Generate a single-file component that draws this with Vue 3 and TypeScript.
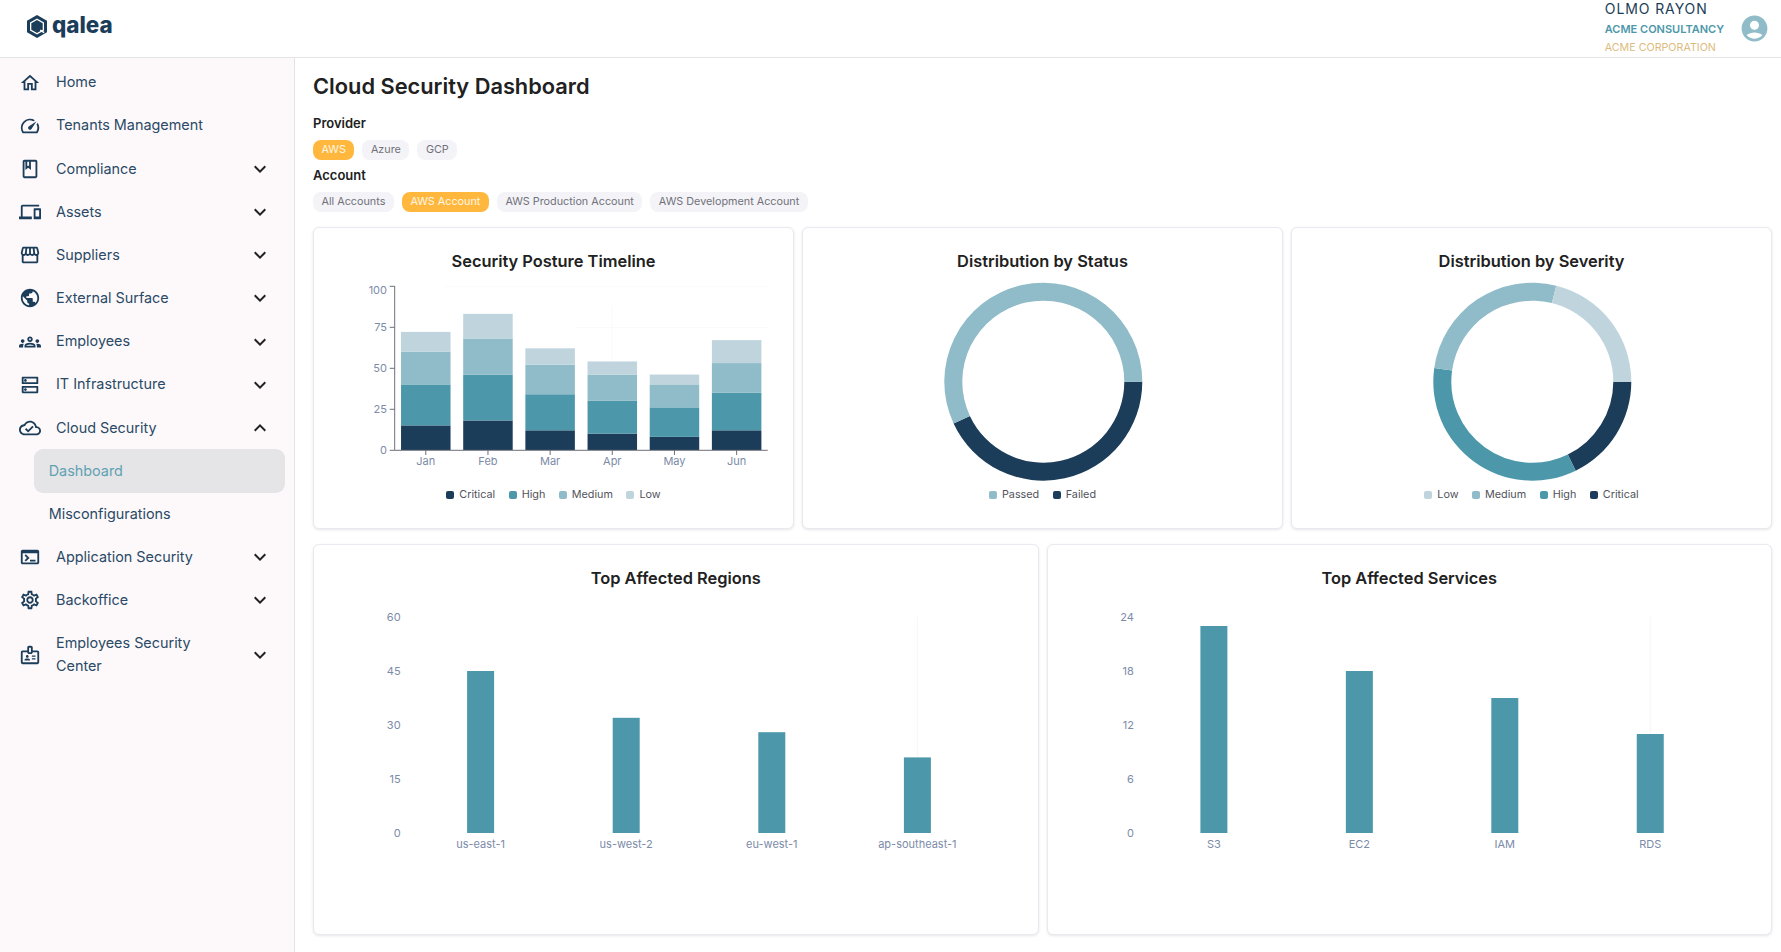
<script setup lang="ts">
interface NavItem { label: string; d: string; chevron?: 'down' | 'up' }

const DOWN = 'M16.59 8.59 12 13.17 7.41 8.59 6 10l6 6 6-6z'
const UP = 'm12 8-6 6 1.41 1.41L12 10.83l4.59 4.58L18 14z'

const topItems: NavItem[] = [
  { label: 'Home', d: 'M12 5.69l5 4.5V18h-2v-6H9v6H7v-7.81l5-4.5M12 3L2 12h3v8h6v-6h2v6h6v-8h3L12 3z' },
  { label: 'Tenants Management', d: 'M20.38 8.57l-1.23 1.85a8 8 0 0 1-.22 7.58H5.07A8 8 0 0 1 15.58 6.85l1.85-1.23A10 10 0 0 0 3.35 19a2 2 0 0 0 1.72 1h13.85a2 2 0 0 0 1.74-1 10 10 0 0 0-.27-10.44zm-9.79 6.84a2 2 0 0 0 2.83 0l5.66-8.49-8.49 5.66a2 2 0 0 0 0 2.83z' },
  { label: 'Compliance', chevron: 'down', d: 'M18 2H6c-1.1 0-2 .9-2 2v16c0 1.1.9 2 2 2h12c1.1 0 2-.9 2-2V4c0-1.1-.9-2-2-2zM9 4h2v5l-1-.75L9 9V4zm9 16H6V4h1v9l3-2.25L13 13V4h5v16z' },
  { label: 'Assets', chevron: 'down', d: 'M4 6h18V4H4c-1.1 0-2 .9-2 2v11H0v3h14v-3H4V6zm19 2h-6c-.55 0-1 .45-1 1v10c0 .55.45 1 1 1h6c.55 0 1-.45 1-1V9c0-.55-.45-1-1-1zm-1 9h-4v-7h4v7z' },
  { label: 'Suppliers', chevron: 'down', d: 'M21.9 8.89l-1.05-4.37c-.22-.9-1-1.52-1.91-1.52H5.05c-.9 0-1.69.63-1.9 1.52L2.1 8.89c-.24 1.02-.02 2.06.62 2.88.08.11.19.19.28.29V19c0 1.1.9 2 2 2h14c1.1 0 2-.9 2-2v-6.94c.09-.09.2-.18.28-.28.64-.82.87-1.87.62-2.89zm-2.99-3.9l1.05 4.37c.1.42.01.84-.25 1.17-.14.18-.44.47-.94.47-.61 0-1.14-.49-1.21-1.14L16.98 5l1.93-.01zM13 5h1.96l.54 4.52c.05.39-.07.78-.33 1.07-.22.26-.54.41-.95.41-.67 0-1.22-.59-1.22-1.31V5zM8.49 9.52L9.04 5H11v4.69c0 .72-.55 1.31-1.29 1.31-.34 0-.65-.15-.89-.41-.25-.29-.37-.68-.33-1.07zm-4.45-.16L5.05 5h1.97l-.58 4.86c-.08.65-.6 1.14-1.21 1.14-.49 0-.8-.29-.93-.47-.27-.32-.36-.75-.26-1.17zM5 19v-6.03c.08.01.15.03.23.03.87 0 1.66-.36 2.24-.95.6.6 1.4.95 2.31.95.87 0 1.65-.36 2.23-.93.59.57 1.39.93 2.29.93.84 0 1.64-.35 2.24-.95.58.59 1.37.95 2.24.95.08 0 .15-.02.23-.03V19H5z' },
  { label: 'External Surface', chevron: 'down', d: 'M12 2C6.48 2 2 6.48 2 12s4.48 10 10 10 10-4.48 10-10S17.52 2 12 2zm-1 17.93c-3.95-.49-7-3.85-7-7.93 0-.62.08-1.21.21-1.79L9 15v1c0 1.1.9 2 2 2v1.93zm6.9-2.54c-.26-.81-1-1.39-1.9-1.39h-1v-3c0-.55-.45-1-1-1H8v-2h2c.55 0 1-.45 1-1V7h2c1.1 0 2-.9 2-2v-.41c2.93 1.19 5 4.06 5 7.41 0 2.08-.8 3.97-2.1 5.39z' },
  { label: 'Employees', chevron: 'down', d: 'M4 13c1.1 0 2-.9 2-2s-.9-2-2-2-2 .9-2 2 .9 2 2 2zm1.13 1.1c-.37-.06-.74-.1-1.13-.1-.99 0-1.93.21-2.78.58C.48 14.9 0 15.62 0 16.43V18h4.5v-1.61c0-.83.23-1.61.63-2.29zM20 13c1.1 0 2-.9 2-2s-.9-2-2-2-2 .9-2 2 .9 2 2 2zm4 3.43c0-.81-.48-1.53-1.22-1.85-.85-.37-1.79-.58-2.78-.58-.39 0-.76.04-1.13.1.4.68.63 1.46.63 2.29V18H24v-1.57zm-7.76-2.78c-1.17-.52-2.61-.9-4.24-.9-1.63 0-3.07.39-4.24.9C6.68 14.13 6 15.21 6 16.39V18h12v-1.61c0-1.18-.68-2.26-1.76-2.74zM8.07 16c.09-.23.13-.39.91-.69.97-.38 1.99-.56 3.02-.56s2.05.18 3.02.56c.77.3.81.46.91.69H8.07zM12 8c.55 0 1 .45 1 1s-.45 1-1 1-1-.45-1-1 .45-1 1-1m0-2c-1.66 0-3 1.34-3 3s1.34 3 3 3 3-1.34 3-3-1.34-3-3-3z' },
  { label: 'IT Infrastructure', chevron: 'down', d: 'M19 15v4H5v-4h14m1-2H4c-.55 0-1 .45-1 1v6c0 .55.45 1 1 1h16c.55 0 1-.45 1-1v-6c0-.55-.45-1-1-1zM7 18.5c-.82 0-1.5-.67-1.5-1.5s.68-1.5 1.5-1.5 1.5.67 1.5 1.5-.67 1.5-1.5 1.5zM19 5v4H5V5h14m1-2H4c-.55 0-1 .45-1 1v6c0 .55.45 1 1 1h16c.55 0 1-.45 1-1V4c0-.55-.45-1-1-1zM7 8.5c-.82 0-1.5-.67-1.5-1.5S6.18 5.5 7 5.5s1.5.68 1.5 1.5S7.83 8.5 7 8.5z' },
  { label: 'Cloud Security', chevron: 'up', d: 'M19.35 10.04C18.67 6.59 15.64 4 12 4 9.11 4 6.61 5.64 5.36 8.04 2.35 8.36 0 10.9 0 14c0 3.31 2.69 6 6 6h13c2.76 0 5-2.24 5-5 0-2.64-2.05-4.78-4.65-4.96zM19 18H6c-2.21 0-4-1.79-4-4 0-2.05 1.53-3.76 3.56-3.97l1.07-.11.5-.95C8.08 7.14 9.94 6 12 6c2.62 0 4.88 1.86 5.39 4.43l.3 1.5 1.53.11c1.56.1 2.78 1.41 2.78 2.96 0 1.65-1.35 3-3 3zm-9-3.82l-2.09-2.09L6.5 13.5 10 17l6.01-6.01-1.41-1.41z' },
]
const bottomItems: NavItem[] = [
  { label: 'Application Security', chevron: 'down', d: 'M20 4H4c-1.1 0-2 .9-2 2v12c0 1.1.9 2 2 2h16c1.1 0 2-.9 2-2V6c0-1.1-.9-2-2-2zm0 14H4V8h16v10zm-2-1h-6v-2h6v2zM7.5 17l-1.41-1.41L8.67 13l-2.59-2.59L7.5 9l4 4-4 4z' },
  { label: 'Backoffice', chevron: 'down', d: 'M19.43 12.98c.04-.32.07-.64.07-.98 0-.34-.03-.66-.07-.98l2.11-1.65c.19-.15.24-.42.12-.64l-2-3.46c-.09-.16-.26-.25-.44-.25-.06 0-.12.01-.17.03l-2.49 1c-.52-.4-1.08-.73-1.69-.98l-.38-2.65C14.46 2.18 14.25 2 14 2h-4c-.25 0-.46.18-.49.42l-.38 2.65c-.61.25-1.17.59-1.69.98l-2.49-1c-.06-.02-.12-.03-.18-.03-.17 0-.34.09-.43.25l-2 3.46c-.13.22-.07.49.12.64l2.11 1.65c-.04.32-.07.65-.07.98 0 .33.03.66.07.98l-2.11 1.65c-.19.15-.24.42-.12.64l2 3.46c.09.16.26.25.44.25.06 0 .12-.01.17-.03l2.49-1c.52.4 1.08.73 1.69.98l.38 2.65c.03.24.24.42.49.42h4c.25 0 .46-.18.49-.42l.38-2.65c.61-.25 1.17-.59 1.69-.98l2.49 1c.06.02.12.03.18.03.17 0 .34-.09.43-.25l2-3.46c.12-.22.07-.49-.12-.64l-2.11-1.65zm-1.98-1.71c.04.31.05.52.05.73 0 .21-.02.43-.05.73l-.14 1.13.89.7 1.08.84-.7 1.21-1.27-.51-1.04-.42-.9.68c-.43.32-.84.56-1.25.73l-1.06.43-.16 1.13-.2 1.35h-1.4l-.19-1.35-.16-1.13-1.06-.43c-.43-.18-.83-.41-1.23-.71l-.91-.7-1.06.43-1.27.51-.7-1.21 1.08-.84.89-.7-.14-1.13c-.03-.31-.05-.54-.05-.74s.02-.43.05-.73l.14-1.13-.89-.7-1.08-.84.7-1.21 1.27.51 1.04.42.9-.68c.43-.32.84-.56 1.25-.73l1.06-.43.16-1.13.2-1.35h1.39l.19 1.35.16 1.13 1.06.43c.43.18.83.41 1.23.71l.91.7 1.06-.43 1.27-.51.7 1.21-1.07.85-.89.7.14 1.13zM12 8c-2.21 0-4 1.79-4 4s1.79 4 4 4 4-1.79 4-4-1.79-4-4-4zm0 6c-1.1 0-2-.9-2-2s.9-2 2-2 2 .9 2 2-.9 2-2 2z' },
  { label: 'Employees Security Center', chevron: 'down', d: 'M20 7h-5V4c0-1.1-.9-2-2-2h-2c-1.1 0-2 .9-2 2v3H4c-1.1 0-2 .9-2 2v11c0 1.1.9 2 2 2h16c1.1 0 2-.9 2-2V9c0-1.1-.9-2-2-2zM11 4h2v5h-2V4zm9 16H4V9h5c0 1.1.9 2 2 2h2c1.1 0 2-.9 2-2h5v11zm-6-4.5h4V17h-4zM14 12.5h4V14h-4zM9 15c.83 0 1.5-.67 1.5-1.5S9.83 12 9 12s-1.5.67-1.5 1.5S8.17 15 9 15zm2.08 1.18c-.63-.28-1.33-.43-2.08-.43s-1.45.15-2.08.43c-.55.24-.92.78-.92 1.39V18h6v-.43c0-.61-.37-1.15-.92-1.39z' },
]

const COLORS = { critical: '#1b3d59', high: '#4c98aa', medium: '#8fbcc8', low: '#bfd4dd' }

const providers = [{ t: 'AWS', on: true }, { t: 'Azure', on: false }, { t: 'GCP', on: false }]
const accounts = [
  { t: 'All Accounts', on: false },
  { t: 'AWS Account', on: true },
  { t: 'AWS Production Account', on: false },
  { t: 'AWS Development Account', on: false },
]

/* Stacked timeline */
const stackUnit = 1.64
const axisX = 80.7
const axisTop = 13
const axisBase = 177
const catW = 62.17
const barW = 49.5
const months = [
  { m: 'Jan', v: [15, 25, 20, 12] },
  { m: 'Feb', v: [18, 28, 22, 15] },
  { m: 'Mar', v: [12, 22, 18, 10] },
  { m: 'Apr', v: [10, 20, 16, 8] },
  { m: 'May', v: [8, 18, 14, 6] },
  { m: 'Jun', v: [12, 23, 18, 14] },
]
const order = [COLORS.critical, COLORS.high, COLORS.medium, COLORS.low]
const stacks = months.map((mo, i) => {
  const cx = axisX + (i + 0.5) * catW
  let sum = 0
  const rects = mo.v.map((val, k) => {
    const y = axisBase - (sum + val) * stackUnit
    sum += val
    return { y, h: val * stackUnit, fill: order[k] }
  })
  return { m: mo.m, cx, x: cx - barW / 2, rects }
})
const yTicks = [
  { t: '100', y: axisTop, ly: axisTop + 3.7 },
  { t: '75', y: axisTop + 41, ly: axisTop + 41 },
  { t: '50', y: axisTop + 82, ly: axisTop + 82 },
  { t: '25', y: axisTop + 123, ly: axisTop + 123 },
  { t: '0', y: axisBase, ly: axisBase },
]

/* Donuts */
function arc(cx: number, cy: number, r0: number, r1: number, a0: number, a1: number): string {
  const p = (r: number, a: number) => {
    const rad = (a * Math.PI) / 180
    return `${(cx + r * Math.cos(rad)).toFixed(2)} ${(cy + r * Math.sin(rad)).toFixed(2)}`
  }
  const large = Math.abs(a1 - a0) > 180 ? 1 : 0
  return `M${p(r1, a0)}A${r1} ${r1} 0 ${large} 1 ${p(r1, a1)}L${p(r0, a1)}A${r0} ${r0} 0 ${large} 0 ${p(r0, a0)}Z`
}
const DCX = 240.3
const DCY = 108.7
const statusSegs = [
  { d: arc(DCX, DCY, 81, 99, 0, 155), fill: COLORS.critical },
  { d: arc(DCX, DCY, 81, 99, 155, 360), fill: COLORS.medium },
]
const severitySegs = [
  { d: arc(DCX, DCY, 81, 99, 0, 64), fill: COLORS.critical },
  { d: arc(DCX, DCY, 81, 99, 64, 188), fill: COLORS.high },
  { d: arc(DCX, DCY, 81, 99, 188, 284), fill: COLORS.medium },
  { d: arc(DCX, DCY, 81, 99, 284, 360), fill: COLORS.low },
]

const legendTimeline = [
  { t: 'Critical', c: COLORS.critical }, { t: 'High', c: COLORS.high },
  { t: 'Medium', c: COLORS.medium }, { t: 'Low', c: COLORS.low },
]
const legendStatus = [{ t: 'Passed', c: COLORS.medium }, { t: 'Failed', c: COLORS.critical }]
const legendSeverity = [
  { t: 'Low', c: COLORS.low }, { t: 'Medium', c: COLORS.medium },
  { t: 'High', c: COLORS.high }, { t: 'Critical', c: COLORS.critical },
]

/* Simple bars */
const BASE = 243
function makeBars(title: string, first: number, pitch: number, labelX: number, max: number, items: [string, number][]) {
  const span = 216
  const unit = span / max
  return {
    title,
    labelX,
    ticks: [0, 1, 2, 3, 4].map((i) => ({ t: String((max / 4) * i), y: BASE - (span / 4) * i })),
    bars: items.map(([n, v], i) => ({ n, cx: first + i * pitch, y: BASE - v * unit, h: v * unit })),
    guideX: first + (items.length - 1) * pitch,
    guideY2: BASE - items[items.length - 1][1] * unit,
  }
}
const barCharts = [
  makeBars('Top Affected Regions', 166.6, 145.6, 86.6, 60, [['us-east-1', 45], ['us-west-2', 32], ['eu-west-1', 28], ['ap-southeast-1', 21]]),
  makeBars('Top Affected Services', 165.9, 145.45, 85.9, 24, [['S3', 23], ['EC2', 18], ['IAM', 15], ['RDS', 11]]),
]
</script>

<template>
  <div class="app">
    <header class="topbar">
      <div class="brand">
        <svg class="brand-mark" width="20" height="23" viewBox="0 0 20 23">
          <path fill="#1b3d59" d="M10 0 20 5.75V17.25L10 23 0 17.25V5.75Z" />
          <path fill="#fff" d="M10 3.4 17 7.4V15.6L10 19.6 3 15.6V7.4Z" />
          <path fill="#1b3d59" d="M10 4.9 15.7 8.2V14.8L10 18.1 4.3 14.8V8.2Z" />
          <path fill="#fff" d="M13.6 14.6 17.6 16.9 16.7 18.3 12.8 15.8Z" />
        </svg>
        <span class="brand-name">qalea</span>
      </div>
      <div class="user">
        <div class="user-text">
          <div class="user-name">OLMO RAYON</div>
          <div class="user-consult">ACME CONSULTANCY</div>
          <div class="user-corp">ACME CORPORATION</div>
        </div>
        <svg width="31" height="31" viewBox="0 0 24 24">
          <path fill="#8fbcc8" d="M12 2C6.48 2 2 6.48 2 12s4.48 10 10 10 10-4.48 10-10S17.52 2 12 2zm0 4c1.93 0 3.5 1.57 3.5 3.5S13.93 13 12 13s-3.5-1.57-3.5-3.5S10.07 6 12 6zm0 14c-2.03 0-4.43-.82-6.14-2.88C7.55 15.8 9.68 15 12 15s4.45.8 6.14 2.12C16.43 19.18 14.03 20 12 20z" />
        </svg>
      </div>
    </header>

    <div class="body">
      <aside class="sidebar">
        <div v-for="item in topItems" :key="item.label" class="nav-row">
          <svg class="nav-icon" width="22" height="22" viewBox="0 0 24 24"><path :d="item.d" /></svg>
          <span class="nav-label">{{ item.label }}</span>
          <svg v-if="item.chevron" class="chev" width="24" height="24" viewBox="0 0 24 24">
            <path :d="item.chevron === 'up' ? UP : DOWN" />
          </svg>
        </div>
        <div class="sub-row active">Dashboard</div>
        <div class="sub-row">Misconfigurations</div>
        <div v-for="item in bottomItems" :key="item.label" class="nav-row">
          <svg class="nav-icon" width="22" height="22" viewBox="0 0 24 24"><path :d="item.d" /></svg>
          <span class="nav-label">{{ item.label }}</span>
          <svg class="chev" width="24" height="24" viewBox="0 0 24 24"><path :d="DOWN" /></svg>
        </div>
      </aside>

      <main class="main">
        <h1 class="page-title">Cloud Security Dashboard</h1>

        <div class="filter-label first">Provider</div>
        <div class="chips">
          <span v-for="c in providers" :key="c.t" class="chip" :class="{ on: c.on }">{{ c.t }}</span>
        </div>
        <div class="filter-label">Account</div>
        <div class="chips">
          <span v-for="c in accounts" :key="c.t" class="chip" :class="{ on: c.on }">{{ c.t }}</span>
        </div>

        <section class="grid three">
          <article class="card">
            <h2 class="card-title">Security Posture Timeline</h2>
            <svg class="chart small">
              <line x1="131" x2="453.5" :y1="axisTop + 0.5" :y2="axisTop + 0.5" class="faint" />
              <line x1="261" x2="453.5" :y1="axisTop + 41.5" :y2="axisTop + 41.5" class="faint" />
              <line x1="298" x2="298" y1="33" y2="124" class="faint" />
              <g v-for="s in stacks" :key="s.m">
                <rect v-for="(r, i) in s.rects" :key="i" :x="s.x" :y="r.y" :width="barW" :height="r.h" :fill="r.fill" />
              </g>
              <line :x1="axisX" :x2="axisX" :y1="axisTop" :y2="axisBase" class="axis" />
              <line :x1="axisX" x2="453.7" :y1="axisBase + 0.3" :y2="axisBase + 0.3" class="axis" />
              <g v-for="t in yTicks" :key="t.t">
                <line :x1="axisX - 5" :x2="axisX" :y1="t.y + 0.3" :y2="t.y + 0.3" class="axis" />
                <text class="tick" text-anchor="end" :x="73" :y="t.ly" dy="0.36em">{{ t.t }}</text>
              </g>
              <g v-for="s in stacks" :key="s.m + 'x'">
                <line :x1="s.cx" :x2="s.cx" :y1="axisBase" :y2="axisBase + 5" class="axis" />
                <text class="tick" text-anchor="middle" :x="s.cx" :y="axisBase + 11.3" dy="0.36em">{{ s.m }}</text>
              </g>
            </svg>
            <div class="legend">
              <span v-for="l in legendTimeline" :key="l.t" class="legend-item"><i class="swatch" :style="{ background: l.c }"></i>{{ l.t }}</span>
            </div>
          </article>

          <article class="card">
            <h2 class="card-title">Distribution by Status</h2>
            <svg class="chart small">
              <path v-for="(s, i) in statusSegs" :key="i" :d="s.d" :fill="s.fill" />
            </svg>
            <div class="legend">
              <span v-for="l in legendStatus" :key="l.t" class="legend-item"><i class="swatch" :style="{ background: l.c }"></i>{{ l.t }}</span>
            </div>
          </article>

          <article class="card">
            <h2 class="card-title">Distribution by Severity</h2>
            <svg class="chart small">
              <path v-for="(s, i) in severitySegs" :key="i" :d="s.d" :fill="s.fill" />
            </svg>
            <div class="legend">
              <span v-for="l in legendSeverity" :key="l.t" class="legend-item"><i class="swatch" :style="{ background: l.c }"></i>{{ l.t }}</span>
            </div>
          </article>
        </section>

        <section class="grid two">
          <article v-for="c in barCharts" :key="c.title" class="card">
            <h2 class="card-title">{{ c.title }}</h2>
            <svg class="chart large">
              <line :x1="c.guideX" :x2="c.guideX" y1="27" :y2="c.guideY2" class="faint-strong" />
              <text v-for="t in c.ticks" :key="t.t" class="tick" text-anchor="end" :x="c.labelX" :y="t.y" dy="0.36em">{{ t.t }}</text>
              <g v-for="b in c.bars" :key="b.n">
                <rect :x="b.cx - 13.5" :y="b.y" width="27" :height="b.h" fill="#4c98aa" />
                <text class="tick" text-anchor="middle" :x="b.cx" :y="BASE + 11" dy="0.36em">{{ b.n }}</text>
              </g>
            </svg>
          </article>
        </section>
      </main>
    </div>
  </div>
</template>

<style>
html, body { margin: 0; padding: 0; background: #fff; }
</style>

<style scoped>
.app {
  font-family: Inter, "Noto Sans", sans-serif;
  min-height: 100vh;
  display: flex;
  flex-direction: column;
  color: #1b3d59;
}
.topbar {
  height: 57px;
  border-bottom: 1px solid #e4e4e7;
  display: flex;
  align-items: flex-start;
  justify-content: space-between;
  padding: 0 11px 0 27px;
  background: #fff;
  overflow: hidden;
}
.brand { display: flex; align-items: center; gap: 5px; height: 52px; }
.brand-mark { display: block; }
.brand-name {
  font-size: 22.4px;
  font-weight: 800;
  color: #1b3d59;
  line-height: 26px;
  margin-top: -3px;
}
.user { display: flex; align-items: center; gap: 15px; }
.user-name { font-size: 14px; line-height: 18px; letter-spacing: 0.9px; color: #1b3d59; white-space: nowrap; }
.user-consult { font-size: 11px; line-height: 22px; font-weight: 600; color: #4c98aa; white-space: nowrap; }
.user-corp { font-size: 10.7px; line-height: 16px; color: #dcbb7d; white-space: nowrap; }

.body { flex: 1; display: flex; }
.sidebar {
  width: 294px;
  flex: none;
  box-sizing: content-box;
  border-right: 1px solid #e4e4e7;
  background: #fdf9fb;
  padding-top: 3px;
  min-height: 890px;
}
.nav-row {
  display: flex;
  align-items: center;
  padding: 10.34px 22px 10.34px 19px;
  font-size: 14.4px;
  line-height: 22.5px;
}
.nav-icon { flex: none; fill: #1b3d59; margin-right: 15px; }
.nav-label { flex: 1; padding-right: 10px; color: #2a4a66; }
.chev { flex: none; fill: #222; margin: -2px 0; }
.sub-row {
  margin-left: 34px;
  width: 236px;
  padding: 10.34px 0 10.34px 14.7px;
  font-size: 14.4px;
  line-height: 22.5px;
  border-radius: 9px;
  color: #2a4a66;
}
.sub-row.active { background: #e5e4e7; color: #5fa2b2; }

.main { flex: 1; min-width: 0; padding: 13px 9px 0 18px; background: #fff; }
.page-title {
  margin: 0;
  font-size: 21.8px;
  line-height: 30px;
  font-weight: 600;
  color: #212121;
}
.filter-label { font-size: 13px; line-height: 20px; font-weight: 600; color: #212121; margin-top: 5.5px; }
.filter-label.first { margin-top: 12px; }
.chips { display: flex; gap: 8px; margin-top: 6.9px; }
.chip {
  height: 20px;
  line-height: 20px;
  padding: 0 8.5px;
  border-radius: 8px;
  background: #f4f4f8;
  color: #71717a;
  font-size: 10.8px;
  white-space: nowrap;
}
.chip.on { background: #ffb83d; color: #fff6e5; }

.grid { display: grid; gap: 8px; }
.grid.three { grid-template-columns: repeat(3, 1fr); margin-top: 15px; }
.grid.two { grid-template-columns: repeat(2, 1fr); margin-top: 15.6px; }
.grid.two .card { padding-top: 21px; }
.card {
  background: #fff;
  border: 1px solid #e9e9ef;
  border-radius: 6px;
  box-shadow: 0 1px 3px rgba(0, 0, 0, 0.1);
  padding-top: 20.8px;
  min-width: 0;
}
.card-title {
  margin: 0;
  text-align: center;
  font-size: 16.4px;
  line-height: 24px;
  font-weight: 600;
  color: #212121;
}
.chart { display: block; width: 100%; }
.chart.small { height: 210px; }
.chart.large { height: 344px; }
.faint { stroke: #fafafa; stroke-width: 1; }
.faint-strong { stroke: #f6f6f7; stroke-width: 1; }
.axis { stroke: #6e7079; stroke-width: 1; }
.tick { font-size: 11px; fill: #7c8ba8; font-family: Inter, sans-serif; }
.legend {
  display: flex;
  justify-content: center;
  gap: 13.5px;
  margin: 4.8px 0 25.7px;
  height: 14px;
  line-height: 14px;
  font-size: 10.8px;
  color: #52525b;
}
.legend-item { display: flex; align-items: center; gap: 5px; }
.swatch { display: block; width: 8px; height: 8px; border-radius: 2px; }
</style>
